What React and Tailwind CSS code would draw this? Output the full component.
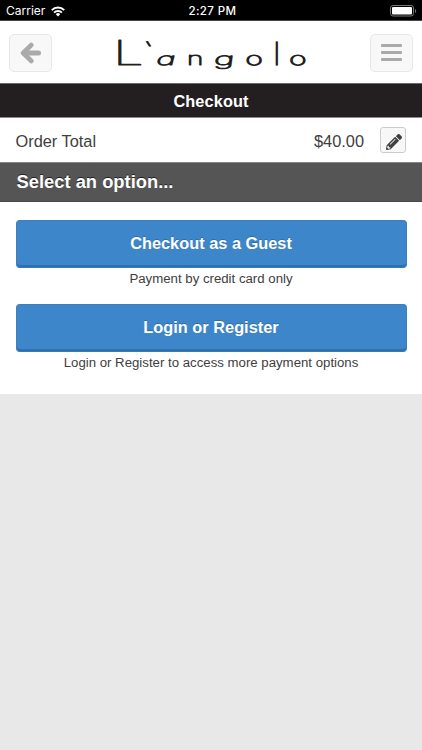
import { FaPencilAlt } from 'react-icons/fa';

const LOGO_GLYPHS = [
  { ch: 'L', t: 'translate(112.9 64.4) scale(1.63 1)', size: 33.5, w: 1.15 },
  { ch: '`', t: 'translate(143.6 64.5) scale(1.1 1)', size: 32, w: 1.4 },
  { ch: 'a', t: 'translate(155.2 64) skewX(-14) scale(1.95 1)', size: 17, w: 1.05 },
  { ch: 'n', t: 'translate(187 64) scale(1.65 1)', size: 17, w: 1.05 },
  { ch: 'g', t: 'translate(213.6 64) skewX(-8) scale(2.05 1)', size: 17, w: 1.05 },
  { ch: 'o', t: 'translate(245.6 64) scale(1.75 1)', size: 17, w: 1.15 },
  { ch: 'l', t: 'translate(273.6 64.4) scale(1 1)', size: 30.5, w: 1.5 },
  { ch: 'o', t: 'translate(289.2 64) scale(1.75 1)', size: 17, w: 1.15 },
];

function Logo() {
  return (
    <svg width="220" height="62" viewBox="101 21 220 62" role="img" aria-label="L`angolo">
      {LOGO_GLYPHS.map((g, i) => (
        <text
          key={i}
          transform={g.t}
          fontSize={g.size}
          fontFamily="Inter, sans-serif"
          fontWeight="100"
          fill="#231f20"
          stroke="#231f20"
          strokeWidth={g.w}
          strokeLinejoin="round"
          className="[font-feature-settings:'cv11']"
        >
          {g.ch}
        </text>
      ))}
    </svg>
  );
}

function StatusBar() {
  return (
    <div className="grid h-[21px] grid-cols-3 items-center border-b border-[#4a4748] bg-black px-[6px] font-[Inter,sans-serif] text-[12px] leading-5 text-white">
      <div className="flex items-center gap-[6px] pt-px">
        <span className="text-[12px]">Carrier</span>
        <svg width="14" height="11" viewBox="0 0 14 11" fill="none" stroke="white" strokeWidth="2">
          <path d="M0.8 4.1a8.8 8.8 0 0 1 12.4 0" />
          <path d="M3.1 6.6a5.5 5.5 0 0 1 7.8 0" />
          <path d="M7 10.5 4.8 8.2a3.1 3.1 0 0 1 4.4 0Z" fill="white" stroke="none" />
        </svg>
      </div>
      <span className="pl-[3px] pt-px text-center text-[11.5px] font-medium tracking-[0.4px]">2:27 PM</span>
      <svg className="mr-[-1px] mt-px justify-self-end" width="27" height="12" viewBox="0 0 27 12">
        <rect x="0.5" y="0.5" width="23" height="10.5" rx="2.5" fill="none" stroke="#777" />
        <rect x="2" y="2" width="20" height="7.5" rx="1" fill="white" />
        <path d="M25 4v4c1.6-.6 1.6-3.4 0-4Z" fill="#777" />
      </svg>
    </div>
  );
}

function HeaderButton({ label, children }) {
  return (
    <button
      aria-label={label}
      className="flex h-[38px] w-[43px] items-center justify-center rounded-[5px] border border-[#e7e7e7] bg-[#f8f8f8]"
    >
      {children}
    </button>
  );
}

function Option({ title, note }) {
  return (
    <div className="h-[84px]">
      <button className="block h-[48px] w-full rounded-[4px] border border-[#3a80bd] border-b-[#3478b4] bg-[#3c86c9] pb-px text-[16.35px] font-bold text-white shadow-[inset_0_-2px_0_#2f71ac] [text-shadow:0_-1px_0_rgba(0,0,0,0.2)]">
        {title}
      </button>
      <p className="pt-[2px] text-center text-[13.22px] leading-[18px] text-[#404040]">{note}</p>
    </div>
  );
}

export default function App() {
  return (
    <div className="flex h-[750px] w-[422px] flex-col bg-[#e8e8e8] font-['Liberation_Sans',Arial,sans-serif] text-[#404040]">
      <StatusBar />
      <header className="flex h-[62px] items-center justify-between bg-white pl-[9px] pr-[9px] pt-px">
        <HeaderButton label="Back">
          <svg width="22" height="22" viewBox="0 0 22 22" fill="none" stroke="#aaaaaa" strokeWidth="4.8" strokeLinecap="round" strokeLinejoin="round">
            <path d="M11.2 3.1 3.2 11l8 7.9" />
            <path d="M4.5 11h14" strokeWidth="5" />
          </svg>
        </HeaderButton>
        <Logo />
        <HeaderButton label="Menu">
          <span className="flex flex-col gap-1">
            <span className="h-[3px] w-[21px] rounded-[1px] bg-[#aaaaaa]" />
            <span className="h-[3px] w-[21px] rounded-[1px] bg-[#aaaaaa]" />
            <span className="h-[3px] w-[21px] rounded-[1px] bg-[#aaaaaa]" />
          </span>
        </HeaderButton>
      </header>
      <h1 className="h-[35px] border-b border-t border-b-[#8d8b8c] border-t-[#6b696a] bg-[#231f20] text-center text-[16.3px] font-bold leading-[35px] tracking-[0.12px] text-white">
        Checkout
      </h1>
      <div className="flex h-[44px] items-center bg-white px-[15px] text-[16.35px]">
        <span className="pl-[0.5px] pt-[2px]">Order Total</span>
        <span className="ml-auto mr-4 pt-[2px]">$40.00</span>
        <button
          aria-label="Edit"
          className="mr-px flex h-[26px] w-[26px] items-center justify-center rounded-[3px] border border-[#cccccc] bg-[#f7f7f7] pl-px pt-1 text-[#404040]"
        >
          <FaPencilAlt size={16} />
        </button>
      </div>
      <h2 className="h-[40px] border-b border-t border-b-[#484848] border-t-[#858585] bg-[#555555] pl-[16.5px] text-[18.35px] font-bold leading-[37px] text-white [text-shadow:0_-1px_0_#222]">
        Select an option...
      </h2>
      <main className="h-[192px] bg-white px-[15.5px] pt-[18px]">
        <Option title="Checkout as a Guest" note="Payment by credit card only" />
        <Option title="Login or Register" note="Login or Register to access more payment options" />
      </main>
    </div>
  );
}
